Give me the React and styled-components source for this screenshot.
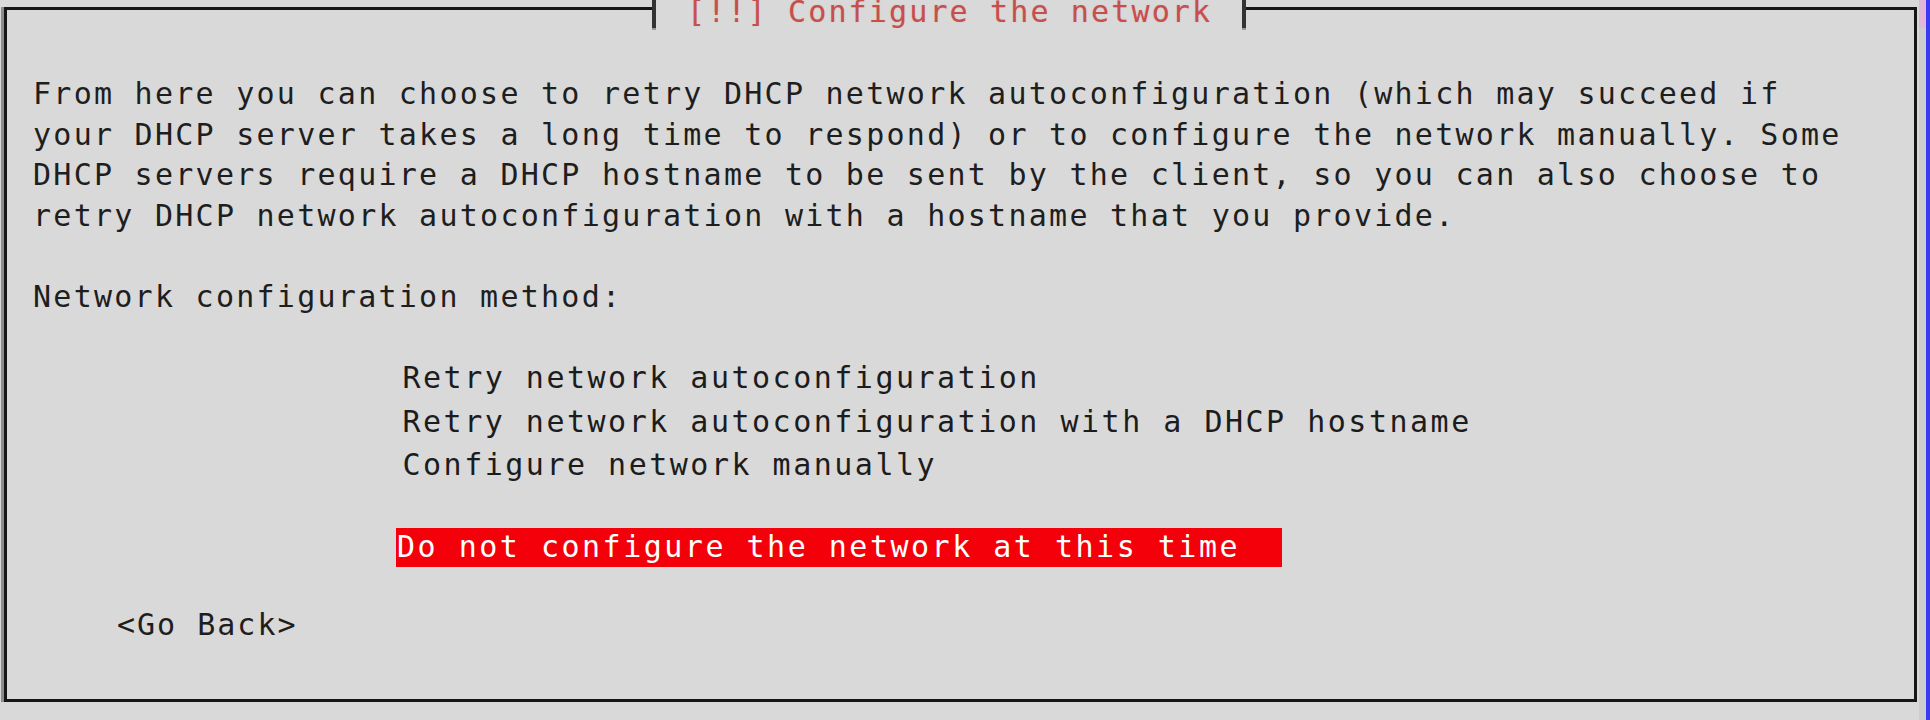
import React from "react";
import styled, { createGlobalStyle } from "styled-components";

const mono = `"DejaVu Sans Mono", "Liberation Mono", monospace`;

const GlobalStyle = createGlobalStyle`
    html, body {
        margin: 0;
        padding: 0;
        background: #d9d9d9;
    }
`;

const Screen = styled.div`
    display: flex;
    flex-direction: row;
    width: 1930px;
    height: 720px;
    overflow: hidden;
    background: #d9d9d9;
    font-family: ${mono};
`;

const FrameArea = styled.div`
    padding: 7px 0 0 4px;
`;

const Frame = styled.div`
    position: relative;
    box-sizing: border-box;
    width: 1913px;
    height: 695px;
    border: 3px solid #161616;
    box-shadow: -3px 0 0 #8c8c8c;
    padding: 64.3px 0 0 26px;
`;

/* title sits over the top border, like a fieldset legend */
const Legend = styled.div`
    position: absolute;
    left: 645px;
    top: -10px;
    height: 30px;
    display: flex;
    flex-direction: row;
    align-items: stretch;
    background: #d9d9d9;
`;

const LegendTick = styled.span`
    width: 4px;
    background: linear-gradient(#333 0, #333 28px, #999 28px);
`;

const LegendText = styled.span`
    padding: 0 30px 0 31px;
    font-size: 30px;
    line-height: 24px;
    letter-spacing: 2.14px;
    white-space: pre;
    color: #c4504e;
    text-shadow: 0 0 1px rgba(235, 140, 140, 0.7);
`;

const Intro = styled.div`
    font-size: 30px;
    line-height: 40.6px;
    letter-spacing: 2.26px;
    color: #1e1e1e;
    white-space: pre;
`;

const MethodLabel = styled(Intro)`
    margin-top: 40.6px;
`;

const Menu = styled.div`
    display: flex;
    flex-direction: column;
    align-items: flex-start;
    margin: 38.3px 0 0 363px;
`;

const MenuItem = styled.div`
    box-sizing: border-box;
    font-size: 30px;
    letter-spacing: 2.5px;
    white-space: pre;
    line-height: ${(p) => (p.$selected ? "38.5px" : "43.4px")};
    margin-top: ${(p) => (p.$selected ? "42.1px" : "0")};
    padding-left: ${(p) => (p.$selected ? "1px" : "6.5px")};
    width: ${(p) => (p.$selected ? "886px" : "auto")};
    background: ${(p) => (p.$selected ? "#f4000a" : "transparent")};
    color: ${(p) => (p.$selected ? "#ffffff" : "#1c1c1c")};
`;

const BackButton = styled.div`
    margin: 37px 0 0 84px;
    font-size: 30px;
    line-height: 41px;
    letter-spacing: 2.0px;
    color: #1e1e1e;
    white-space: pre;
`;

const EdgeShade = styled.div`
    width: 7px;
    margin-left: 2px;
    background: linear-gradient(#e2b6d8 0, #e2b6d8 28px, #cdcdcd 28px);
`;

const EdgeBlue = styled.div`
    width: 4px;
    background: #3a3af2;
`;

const intro = [
    "From here you can choose to retry DHCP network autoconfiguration (which may succeed if",
    "your DHCP server takes a long time to respond) or to configure the network manually. Some",
    "DHCP servers require a DHCP hostname to be sent by the client, so you can also choose to",
    "retry DHCP network autoconfiguration with a hostname that you provide.",
];

const options = [
    { label: "Retry network autoconfiguration" },
    { label: "Retry network autoconfiguration with a DHCP hostname" },
    { label: "Configure network manually" },
    { label: "Do not configure the network at this time", selected: true },
];

const App = () => {
    return (
        <>
            <GlobalStyle />
            <Screen>
                <FrameArea>
                    <Frame>
                        <Legend>
                            <LegendTick />
                            <LegendText>[!!] Configure the network</LegendText>
                            <LegendTick />
                        </Legend>
                        <Intro>
                            {intro.map((line) => (
                                <div key={line}>{line}</div>
                            ))}
                        </Intro>
                        <MethodLabel>Network configuration method:</MethodLabel>
                        <Menu>
                            {options.map((o) => (
                                <MenuItem key={o.label} $selected={o.selected}>
                                    {o.label}
                                </MenuItem>
                            ))}
                        </Menu>
                        <BackButton>&lt;Go Back&gt;</BackButton>
                    </Frame>
                </FrameArea>
                <EdgeShade />
                <EdgeBlue />
            </Screen>
        </>
    );
};

export default App;
